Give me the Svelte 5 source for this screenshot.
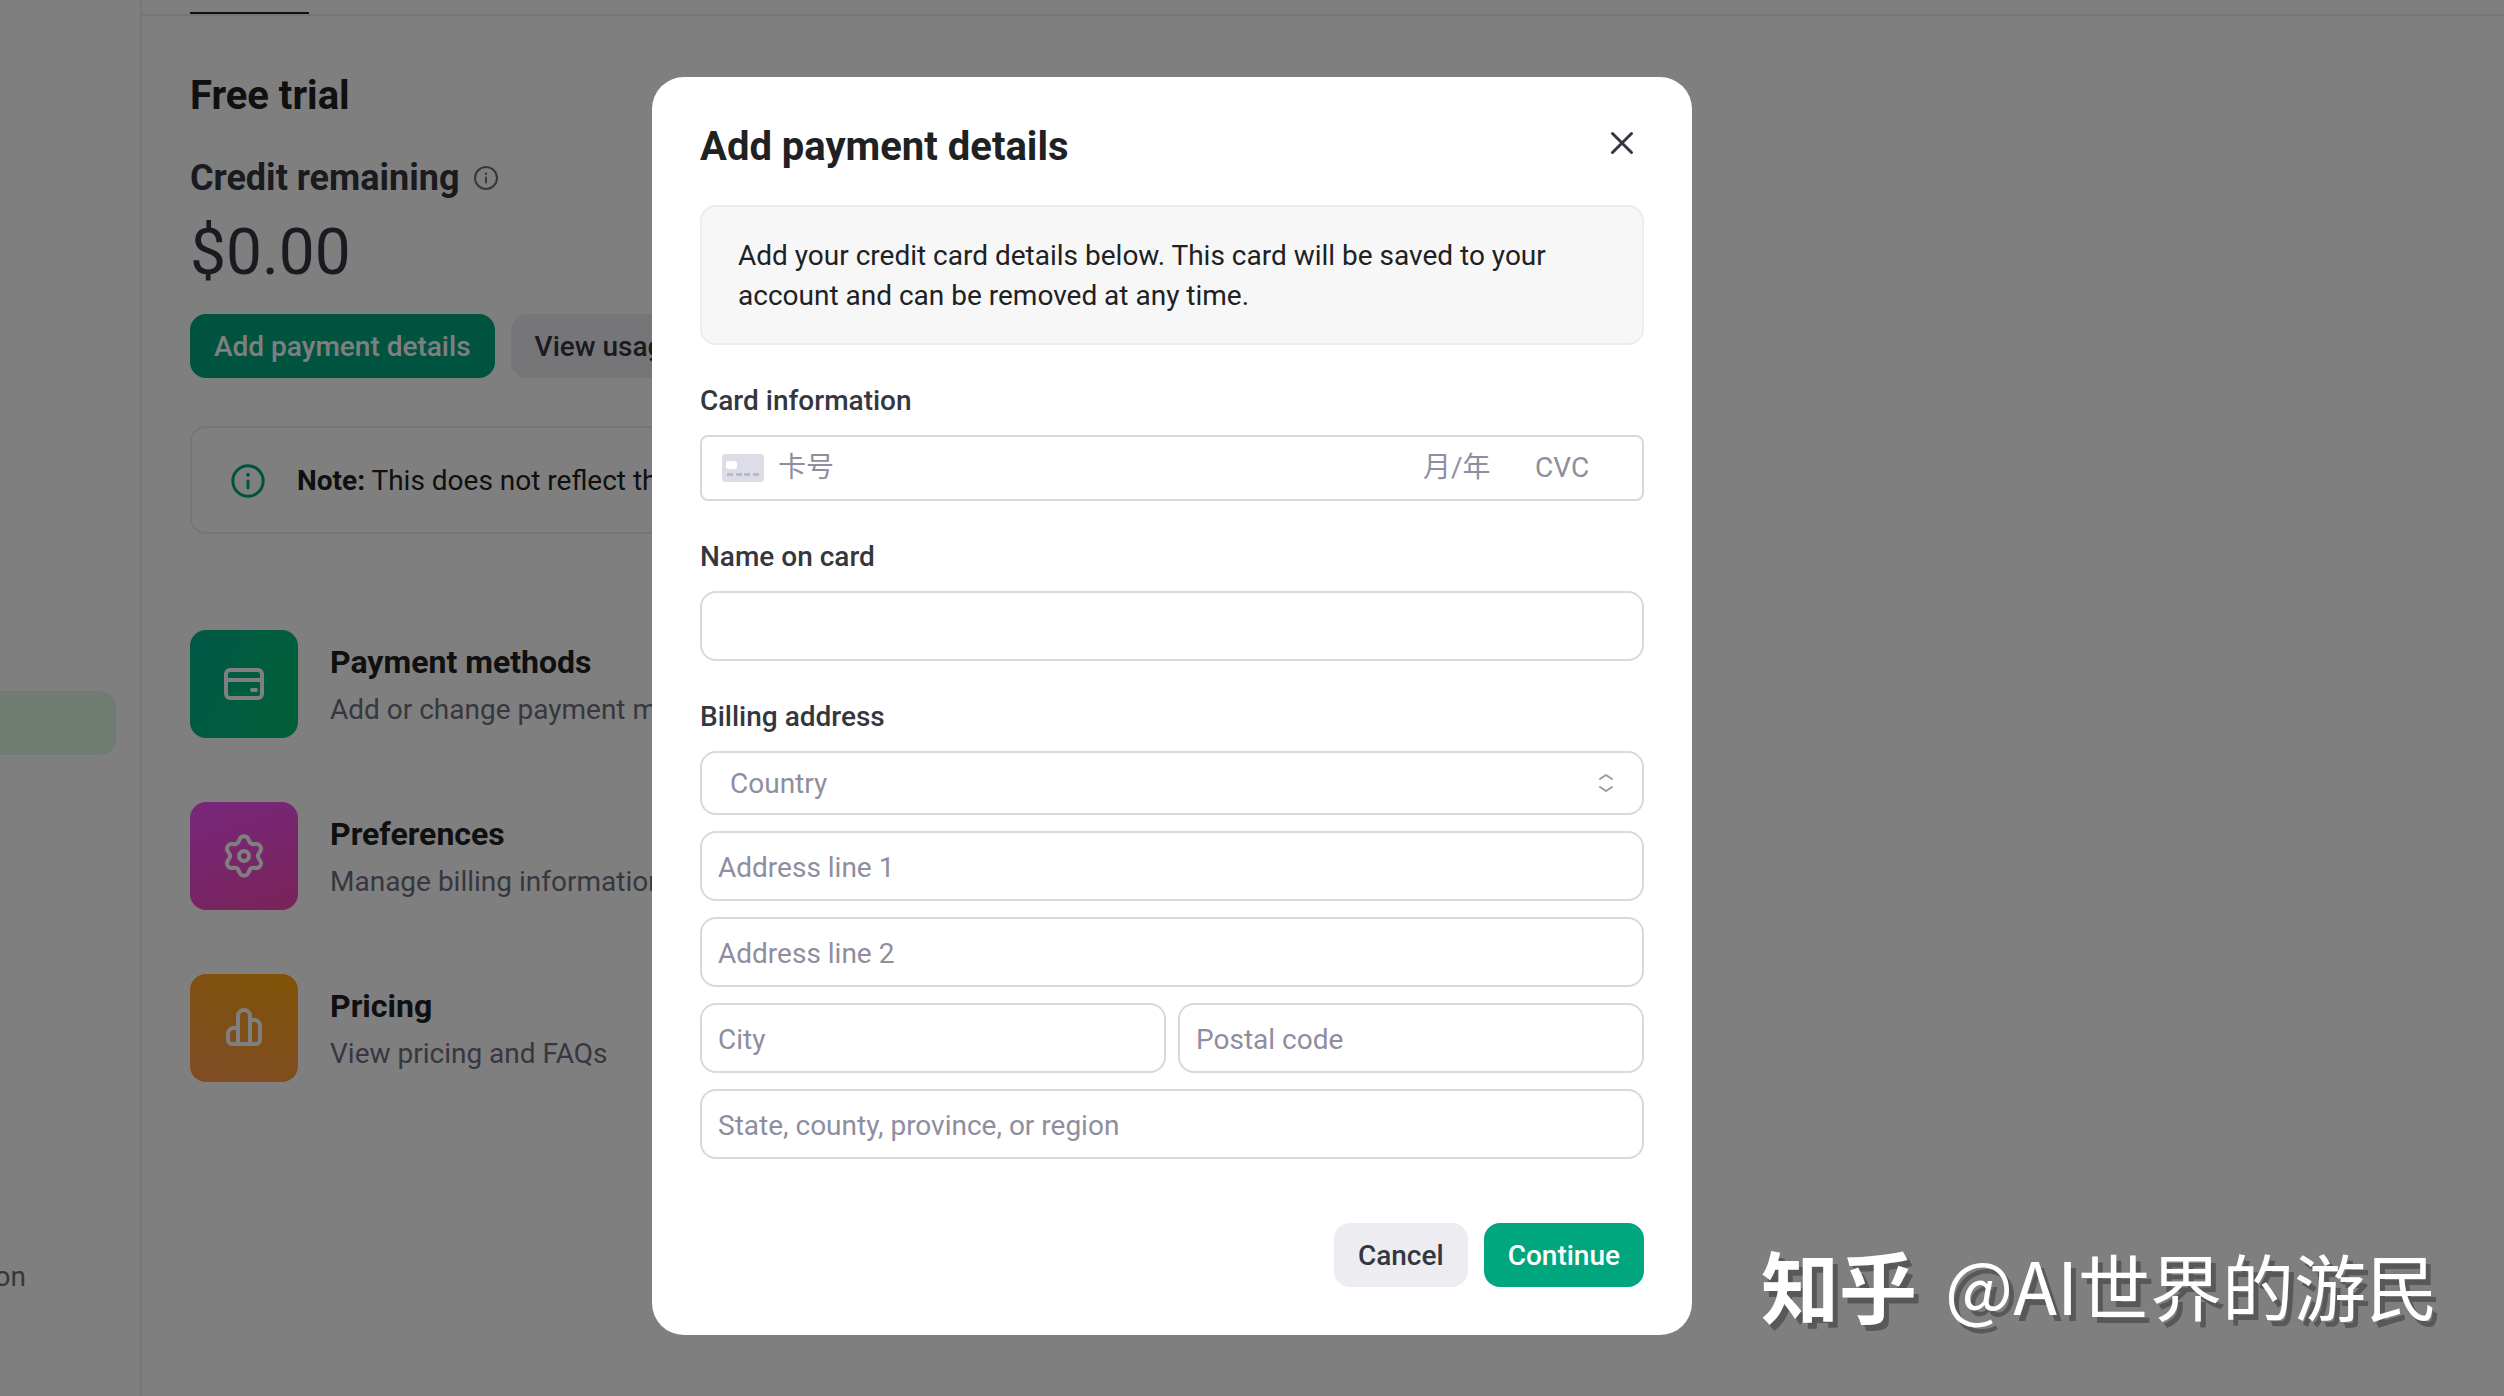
<script>
  const links = [
    { kind: 'card', title: 'Payment methods', text: 'Add or change payment me' },
    { kind: 'gear', title: 'Preferences', text: 'Manage billing information' },
    { kind: 'chart', title: 'Pricing', text: 'View pricing and FAQs' }
  ];
</script>

<div class="page">
  <aside class="sidebar">
    <a class="nav active" href="#billing" aria-label="Billing"></a>
    <a class="nav doc" href="#docs">on</a>
  </aside>

  <main class="main">
    <div class="tabs"><span class="tab"></span></div>
    <div class="content">
      <h1>Free trial</h1>
      <h2>
        Credit remaining
        <svg class="info-small" viewBox="0 0 24 24" fill="none" stroke="currentColor" stroke-width="2" stroke-linecap="round">
          <circle cx="12" cy="12" r="11" />
          <path d="M12 11.5v5" />
          <path d="M12 7.6v.2" stroke-width="2.4" />
        </svg>
      </h2>
      <div class="amount">$0.00</div>
      <div class="actions">
        <button class="btn primary" type="button">Add payment details</button>
        <button class="btn neutral" type="button">View usage</button>
      </div>
      <div class="note">
        <svg class="info-large" viewBox="0 0 34 34" fill="none" stroke="currentColor" stroke-width="3" stroke-linecap="round">
          <circle cx="17" cy="17" r="15.2" />
          <path d="M17 17v7" />
          <path d="M17 10.6v.4" stroke-width="3.6" />
        </svg>
        <p><strong>Note:</strong> This does not reflect the</p>
      </div>

      <div class="links">
        {#each links as link}
          <a class="link" href="#{link.kind}">
            <span class="tile {link.kind}">
              <svg viewBox="0 0 48 48" fill="none" stroke="currentColor" stroke-width="4" stroke-linecap="round" stroke-linejoin="round">
                {#if link.kind === 'card'}
                  <rect x="6" y="10" width="36" height="28" rx="4" />
                  <path d="M6 20h36" />
                  <path d="M32 30h4" />
                {:else if link.kind === 'gear'}
                  <path d="M19.600 7.200a4.800 4.800 0 0 1 8.800 0l.8 2.100a4.800 4.800 0 0 0 4.800 2.900l1.700-.2a4.800 4.800 0 0 1 4.400 7.500l-1 1.500a4.800 4.800 0 0 0 0 6l1 1.500a4.800 4.800 0 0 1-4.400 7.500l-1.700-.2a4.800 4.800 0 0 0-4.800 2.900l-.8 2.100a4.800 4.800 0 0 1-8.800 0l-.8-2.100a4.800 4.800 0 0 0-4.800-2.900l-1.700.2a4.800 4.800 0 0 1-4.400-7.500l1-1.500a4.800 4.800 0 0 0 0-6l-1-1.500a4.800 4.800 0 0 1 4.400-7.500l1.700.2a4.800 4.800 0 0 0 4.800-2.900z" />
                  <circle cx="24" cy="24" r="5" />
                {:else}
                  <path d="M18 40V12a6 6 0 0 1 12 0v28M18 24h-4a6 6 0 0 0-6 6v6a4 4 0 0 0 4 4h24a4 4 0 0 0 4-4V22a6 6 0 0 0-6-6h-4" />
                {/if}
              </svg>
            </span>
            <span class="link-text">
              <span class="link-title">{link.title}</span>
              <span class="link-sub">{link.text}</span>
            </span>
          </a>
        {/each}
      </div>
    </div>
  </main>
</div>

<div class="overlay">
  <form class="modal" role="dialog" aria-labelledby="dialog-title">
    <header>
      <h2 id="dialog-title">Add payment details</h2>
      <button class="close" type="button" aria-label="Close">
        <svg viewBox="0 0 24 24" fill="none" stroke="currentColor" stroke-width="3" stroke-linecap="round"><path d="M2.500 2.500l19 19M21.500 2.500l-19 19" /></svg>
      </button>
    </header>

    <p class="hint">Add your credit card details below. This card will be saved to your account and can be removed at any time.</p>

    <label class="label" for="card-number">Card information</label>
    <div class="card-field">
      <svg class="card-icon" viewBox="0 0 42 28">
        <rect width="42" height="28" rx="3" fill="#dcdde6" />
        <rect x="4" y="7" width="11" height="8" rx="2" fill="#fff" />
        <path d="M5 20.5h6M14 20.5h6M22 20.5h6M31 20.5h6" stroke="#b9bac8" stroke-width="3" />
      </svg>
      <input id="card-number" class="number" placeholder="卡号" />
      <input class="expiry" placeholder="月/年" aria-label="月/年" />
      <input class="cvc" placeholder="CVC" aria-label="CVC" />
    </div>

    <label class="label" for="name">Name on card</label>
    <input id="name" class="field" />

    <label class="label" for="country">Billing address</label>
    <div class="address">
      <div class="select">
        <select id="country"><option>Country</option></select>
        <svg class="chevrons" viewBox="0 0 16 20" fill="none" stroke="currentColor" stroke-width="2" stroke-linecap="round" stroke-linejoin="round">
          <path d="M2 6l6-4 6 4M2 14l6 4 6-4" />
        </svg>
      </div>
      <input class="field" placeholder="Address line 1" aria-label="Address line 1" />
      <input class="field" placeholder="Address line 2" aria-label="Address line 2" />
      <div class="pair">
        <input class="field" placeholder="City" aria-label="City" />
        <input class="field" placeholder="Postal code" aria-label="Postal code" />
      </div>
      <input class="field" placeholder="State, county, province, or region" aria-label="State, county, province, or region" />
    </div>

    <footer>
      <button class="btn neutral" type="button">Cancel</button>
      <button class="btn primary" type="button">Continue</button>
    </footer>
  </form>
</div>

<div class="watermark"><b>知乎</b><span>@AI世界的游民</span></div>

<style>
  :global(body) {
    font-family: Roboto, 'Liberation Sans', 'Noto Sans CJK SC', sans-serif;
    font-size: 28px;
    line-height: 40px;
    color: #202123;
    background: #fff;
  }
  :global(*) {
    box-sizing: border-box;
  }
  h1, h2, p {
    margin: 0;
  }
  svg {
    display: block;
    flex: none;
  }
  a {
    color: inherit;
    text-decoration: none;
  }
  input, select, button {
    font: inherit;
    margin: 0;
  }

  .page {
    display: flex;
    height: 100vh;
    overflow: hidden;
    white-space: nowrap;
  }
  .sidebar {
    width: 142px;
    flex: none;
    border-right: 2px solid #ececf1;
    padding: 691px 24px 0 0;
    display: flex;
    flex-direction: column;
    gap: 502px;
  }
  .nav {
    height: 64px;
  }
  .active {
    border-radius: 0 16px 16px 0;
    background: #e0f6e2;
  }
  .doc {
    display: flex;
    justify-content: flex-end;
    padding-right: 90px;
    color: #6e6e80;
  }
  .main {
    flex: 1;
    min-width: 0;
  }
  .tabs {
    height: 16px;
    padding: 0 48px;
    border-bottom: 2px solid #ececf1;
    display: flex;
  }
  .tab {
    width: 119px;
    border-bottom: 2px solid #202123;
  }
  .content {
    max-width: 1440px;
    padding: 56px 48px;
  }
  h1 {
    font-size: 40px;
    line-height: 48px;
    font-weight: 700;
  }
  .content h2 {
    display: flex;
    align-items: center;
    gap: 14px;
    margin-top: 34px;
    font-size: 36px;
    line-height: 48px;
    font-weight: 700;
    color: #353740;
  }
  .info-small {
    width: 24px;
    height: 24px;
    color: #6e6e80;
  }
  .amount {
    margin-top: 11px;
    font-size: 64px;
    line-height: 80px;
    color: #353740;
  }
  .actions {
    display: flex;
    gap: 16px;
    margin-top: 21px;
  }
  .btn {
    height: 64px;
    padding: 2px 24px 0;
    border: 0;
    border-radius: 16px;
    font-weight: 500;
  }
  .primary {
    background: #00a67e;
    color: #fff;
  }
  .neutral {
    background: #ececf1;
    color: #353740;
  }
  .note {
    display: flex;
    align-items: center;
    gap: 32px;
    height: 108px;
    margin-top: 48px;
    padding: 2px 39px 0;
    border: 2px solid #ececf1;
    border-radius: 16px;
  }
  .note strong {
    font-weight: 700;
  }
  .info-large {
    width: 34px;
    height: 34px;
    color: #00a67e;
  }
  .links {
    display: flex;
    flex-direction: column;
    gap: 64px;
    margin-top: 96px;
  }
  .link {
    display: flex;
    align-items: center;
    gap: 32px;
  }
  .tile {
    width: 108px;
    height: 108px;
    border-radius: 16px;
    display: grid;
    place-items: center;
    color: #fff;
  }
  .tile svg {
    width: 48px;
    height: 48px;
  }
  .card {
    background: linear-gradient(110deg, #00b08c, #00c070);
  }
  .gear {
    background: linear-gradient(160deg, #f050fa, #f046b0);
  }
  .chart {
    background: linear-gradient(20deg, #ff9850, #ffa60a);
  }
  .link-text {
    display: flex;
    flex-direction: column;
    gap: 8px;
    padding-top: 3px;
  }
  .link-title {
    font-size: 32px;
    font-weight: 700;
  }
  .link-sub {
    color: #6e6e80;
  }

  .overlay {
    position: fixed;
    inset: 0;
    display: flex;
    justify-content: center;
    align-items: flex-start;
    padding: 77px 160px 0 0;
    background: rgba(0, 0, 0, 0.5);
  }
  .modal {
    width: 1040px;
    padding: 46px 48px 48px;
    border-radius: 32px;
    background: #fff;
  }
  header {
    display: flex;
    justify-content: space-between;
    align-items: flex-start;
    padding-right: 10px;
  }
  header h2 {
    font-size: 40px;
    line-height: 48px;
    font-weight: 700;
  }
  .close {
    padding: 8px 0;
    border: 0;
    background: none;
    color: #353740;
  }
  .close svg {
    width: 24px;
    height: 24px;
  }
  .hint {
    margin-top: 34px;
    padding: 29px 36px 27px;
    border: 2px solid #ececec;
    border-radius: 16px;
    background: #f7f7f7;
  }
  .label {
    display: block;
    margin: 36px 0 14px;
    font-weight: 500;
    color: #353740;
  }
  .card-field {
    display: flex;
    align-items: center;
    height: 66px;
    padding: 0 20px;
    border: 2px solid #d9d9dc;
    border-radius: 8px;
  }
  .card-field input {
    padding: 0;
    border: 0;
    background: none;
  }
  .card-icon {
    width: 42px;
    height: 28px;
    margin-right: 14px;
  }
  .number {
    flex: 1;
    min-width: 0;
  }
  .expiry {
    width: 112px;
  }
  .cvc {
    width: 87px;
  }
  ::placeholder {
    color: #8e8ea0;
    opacity: 1;
  }
  .field {
    display: block;
    width: 100%;
    height: 70px;
    padding: 3px 16px 0;
    border: 2px solid #d9d9dc;
    border-radius: 16px;
    background: #fff;
  }
  .address {
    display: flex;
    flex-direction: column;
    gap: 16px;
  }
  .pair {
    display: flex;
    gap: 12px;
  }
  .select {
    display: grid;
    align-items: center;
  }
  .select > * {
    grid-area: 1 / 1;
  }
  select {
    width: 100%;
    height: 64px;
    padding: 2px 28px 0;
    border: 2px solid #d9d9dc;
    border-radius: 16px;
    background: #fff;
    color: #8e8ea0;
    appearance: none;
  }
  .chevrons {
    justify-self: end;
    width: 16px;
    height: 20px;
    margin-right: 30px;
    color: #9a9aa8;
    pointer-events: none;
  }
  footer {
    display: flex;
    justify-content: flex-end;
    gap: 16px;
    margin-top: 64px;
  }

  .watermark {
    position: fixed;
    right: 66px;
    bottom: 64px;
    display: flex;
    align-items: center;
    gap: 28px;
    font-family: 'Noto Sans CJK SC', sans-serif;
    font-size: 72px;
    line-height: 96px;
    color: #fff;
    text-shadow: 5px 6px 0 rgba(0, 0, 0, 0.3);
  }
  .watermark b {
    font-size: 78px;
  }
</style>
